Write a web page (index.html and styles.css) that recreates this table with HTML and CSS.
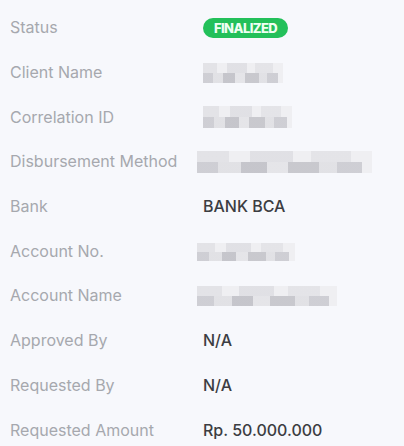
FILE: index.html
```html
<!DOCTYPE html>
<html>
<head>
<meta charset="utf-8">
<link rel="stylesheet" href="styles.css">
</head>
<body>
<div class="details">
  <div class="row"><div class="label">Status</div><div class="value"><span class="badge">FINALIZED</span></div></div>
  <div class="row"><div class="label">Client Name</div><div class="value"><span class="blur blur-client"></span></div></div>
  <div class="row"><div class="label">Correlation ID</div><div class="value"><span class="blur blur-corr"></span></div></div>
  <div class="row"><div class="label">Disbursement Method</div><div class="value shift"><span class="blur blur-method"></span></div></div>
  <div class="row"><div class="label">Bank</div><div class="value">BANK BCA</div></div>
  <div class="row"><div class="label">Account No.</div><div class="value shift"><span class="blur blur-accno"></span></div></div>
  <div class="row"><div class="label">Account Name</div><div class="value shift"><span class="blur blur-accname"></span></div></div>
  <div class="row"><div class="label">Approved By</div><div class="value">N/A</div></div>
  <div class="row"><div class="label">Requested By</div><div class="value">N/A</div></div>
  <div class="row"><div class="label">Requested Amount</div><div class="value">Rp. 50.000.000</div></div>
</div>
</body>
</html>
```
FILE: styles.css
```css
html, body {
  margin: 0;
  padding: 0;
  background: #f7f8fc;
}
body {
  font-family: Inter, "Open Sans", sans-serif;
  font-size: 16px;
  letter-spacing: 0;
}
.details {
  display: flex;
  flex-direction: column;
  padding: 5px 0 0 10px;
}
.row {
  display: grid;
  grid-template-columns: 193px 1fr;
  align-items: center;
  height: 44.7px;
}
.label {
  color: #a6a8ae;
}
.value {
  color: #3c3d42;
  font-weight: 500;
}
.value.shift {
  margin-left: -6px;
}
.badge {
  display: inline-block;
  background: #23c05a;
  color: #effff3;
  font-size: 13px;
  font-weight: 800;
  letter-spacing: -0.6px;
  padding: 3px 11px;
  line-height: 14px;
  border-radius: 10px;
}
.blur {
  display: inline-block;
  vertical-align: middle;
  background-color: #efeff2;
  background-image:
    linear-gradient(90deg, rgba(180,180,188,0.55) 0 12%, rgba(205,205,210,0.4) 12% 25%, rgba(170,170,178,0.6) 25% 40%, rgba(210,210,215,0.35) 40% 52%, rgba(175,175,182,0.6) 52% 70%, rgba(205,205,210,0.4) 70% 80%, rgba(180,180,188,0.55) 80% 94%, transparent 94%),
    linear-gradient(90deg, rgba(215,215,220,0.5) 0 18%, transparent 18% 30%, rgba(210,210,216,0.5) 30% 55%, transparent 55% 65%, rgba(215,215,220,0.45) 65% 88%, transparent 88%);
  background-size: 100% 50%, 100% 50%;
  background-repeat: no-repeat;
  background-position: 0 100%, 0 0;
}
.blur-client { width: 80px; height: 20px; }
.blur-corr { width: 89px; height: 22px; }
.blur-method { width: 175px; height: 22px; }
.blur-accno { width: 98px; height: 18px; }
.blur-accname { width: 140px; height: 20px; }
```
